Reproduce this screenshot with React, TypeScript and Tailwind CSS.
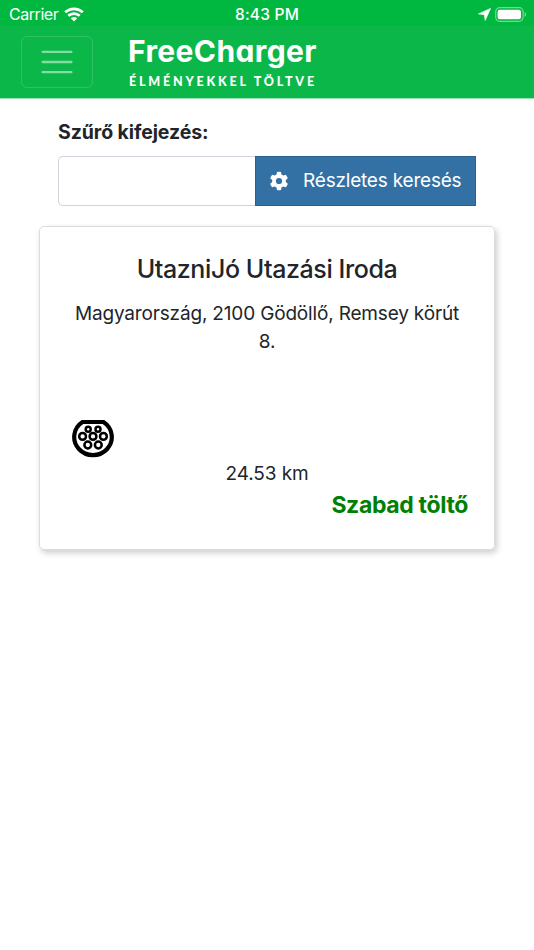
import { useState } from "react";

const chargers = [
  {
    id: 1,
    name: "UtazniJó Utazási Iroda",
    address: "Magyarország, 2100 Gödöllő, Remsey körút 8.",
    distance: "24.53 km",
    status: "Szabad töltő",
  },
];

function StatusBar() {
  return (
    <div className="grid h-[26px] grid-cols-3 items-center bg-[#00b840] pt-[2px] text-[16px] leading-6 text-white">
      <div className="flex items-center pb-[2px] pl-[9px]">
        <span className="tracking-[-0.45px]">Carrier</span>
        <svg className="ml-[6px]" width="20" height="15" viewBox="0 0 20 15" fill="none">
          <path d="M1.2 5.3C6.2 0.7 13.8 0.7 18.8 5.3" stroke="white" strokeWidth="2.7" />
          <path d="M4.3 8.8C7.6 5.8 12.4 5.8 15.7 8.8" stroke="white" strokeWidth="2.7" />
          <path d="M6.8 11.2C8.7 9.6 11.3 9.6 13.2 11.2L10 14.5Z" fill="white" />
        </svg>
      </div>
      <span className="text-center text-[15.5px] font-medium tracking-[0.2px]">8:43 PM</span>
      <div className="flex items-center justify-end pb-[2px] pr-[6px]">
        <svg width="13" height="13" viewBox="0 0 13 13" fill="white">
          <path d="M12.6 0.4L7.2 12.5L6.3 6.7L0.4 5.9Z" stroke="white" strokeWidth="0.6" strokeLinejoin="round" />
        </svg>
        <svg className="ml-[4px] mr-px" width="32" height="15" viewBox="0 0 32 15">
          <rect x="0.7" y="0.7" width="27.4" height="13.6" rx="4" fill="none" stroke="white" strokeOpacity="0.45" strokeWidth="1.2" />
          <rect x="2.6" y="2.7" width="23.4" height="9.6" rx="2.2" fill="white" />
          <path d="M29.6 5C31.4 5.7 31.4 9.3 29.6 10Z" fill="white" fillOpacity="0.5" />
        </svg>
      </div>
    </div>
  );
}

function Navbar() {
  return (
    <nav className="flex h-[73px] items-start border-b border-[#9de2b5] bg-[#0bb749] pl-[21px] pt-[10px]">
      <button
        type="button"
        aria-label="Menü"
        className="flex h-[52px] w-[72px] items-center justify-center rounded-[6px] border border-white/15"
      >
        <svg width="32" height="26" viewBox="0 0 32 26" stroke="white" strokeOpacity="0.5" strokeWidth="2.3" strokeLinecap="round">
          <path d="M1.6 2.8H30.4M1.6 13H30.4M1.6 23.2H30.4" />
        </svg>
      </button>
      {/* cv11 is Inter's single-storey a */}
      <div className="ml-[34px] whitespace-nowrap text-white">
        <div className="ml-px text-[30px] font-bold leading-[30px] tracking-[0.4px] [font-feature-settings:'cv11']">
          FreeCharger
        </div>
        <div className="ml-[2px] mt-[7px] font-['Lato',sans-serif] text-[12.5px] font-black leading-[18px] tracking-[2.8px]">
          ÉLMÉNYEKKEL TÖLTVE
        </div>
      </div>
    </nav>
  );
}

function GearIcon() {
  return (
    <svg width="20" height="20" viewBox="0 0 20 20">
      <path
        fill="white"
        fillRule="evenodd"
        d="M8 1Q10 0.3 12 1L12.5 3.6L14.2 4.6L16.8 3.7Q18.2 5.2 18.8 7.2L16.8 9V11L18.8 12.8Q18.2 14.8 16.8 16.3L14.2 15.4L12.5 16.4L12 19Q10 19.7 8 19L7.5 16.4L5.8 15.4L3.2 16.3Q1.8 14.8 1.2 12.8L3.2 11V9L1.2 7.2Q1.8 5.2 3.2 3.7L5.8 4.6L7.5 3.6ZM10 6.9A3.1 3.1 0 1 0 10 13.1A3.1 3.1 0 1 0 10 6.9Z"
      />
    </svg>
  );
}

// Type 2 charging socket
function SocketIcon() {
  return (
    <svg width="42" height="39" viewBox="0 0 42 39" fill="none" stroke="black">
      <path d="M10.5 2H31.5A18.8 18.1 0 1 1 10.5 2Z" strokeWidth="4.2" strokeLinejoin="round" />
      <g strokeWidth="2.5">
        <circle cx="16.2" cy="9.3" r="2.5" />
        <circle cx="26" cy="9.3" r="2.5" />
        <circle cx="10.6" cy="16.4" r="3.4" />
        <circle cx="21" cy="16.4" r="3.4" />
        <circle cx="31.4" cy="16.4" r="3.4" />
        <circle cx="15.8" cy="25" r="3.4" />
        <circle cx="26.3" cy="25" r="3.4" />
      </g>
    </svg>
  );
}

export default function App() {
  const [query, setQuery] = useState("");

  return (
    <div className="min-h-screen bg-white font-['Inter',sans-serif] text-[#212529]">
      <StatusBar />
      <Navbar />

      <main className="px-[39px] pt-[19px]">
        <div className="px-[19px]">
          <label htmlFor="filter" className="block text-[19.5px] font-bold leading-[29px] tracking-[-0.1px]">
            Szűrő kifejezés:
          </label>
          <div className="mt-[9px] flex h-[50px]">
            <input
              id="filter"
              value={query}
              onChange={(e) => setQuery(e.target.value)}
              className="w-[197px] rounded-l-[5px] border border-r-0 border-[#ced4da] px-4 outline-none"
            />
            <button
              type="button"
              className="flex w-[221px] items-center border border-[#28618f] bg-[#3371a5] pl-[13px] text-[19px] tracking-[-0.2px] text-white"
            >
              <GearIcon />
              <span className="ml-[14px] whitespace-nowrap">Részletes keresés</span>
            </button>
          </div>
        </div>

        {chargers.map((c) => (
          <div
            key={c.id}
            className="mt-5 h-[324px] w-[456px] rounded-[5px] border border-[#dcdcdc] px-[26px] pt-[25px] text-center text-[19px] leading-[28px] shadow-[2px_3px_6px_rgba(0,0,0,0.2)]"
          >
            <h5 className="text-[25px] font-medium leading-[34px] tracking-[-0.4px]">{c.name}</h5>
            <p className="mt-[14px] tracking-[-0.17px]">{c.address}</p>
            <div className="mt-[64px] pl-[6px]">
              <SocketIcon />
            </div>
            <p className="mt-[1px] tracking-[-0.1px]">{c.distance}</p>
            <p className="text-right text-[23px] font-bold leading-[34px] tracking-[-0.35px] text-[#008000]">
              {c.status}
            </p>
          </div>
        ))}
      </main>
    </div>
  );
}
